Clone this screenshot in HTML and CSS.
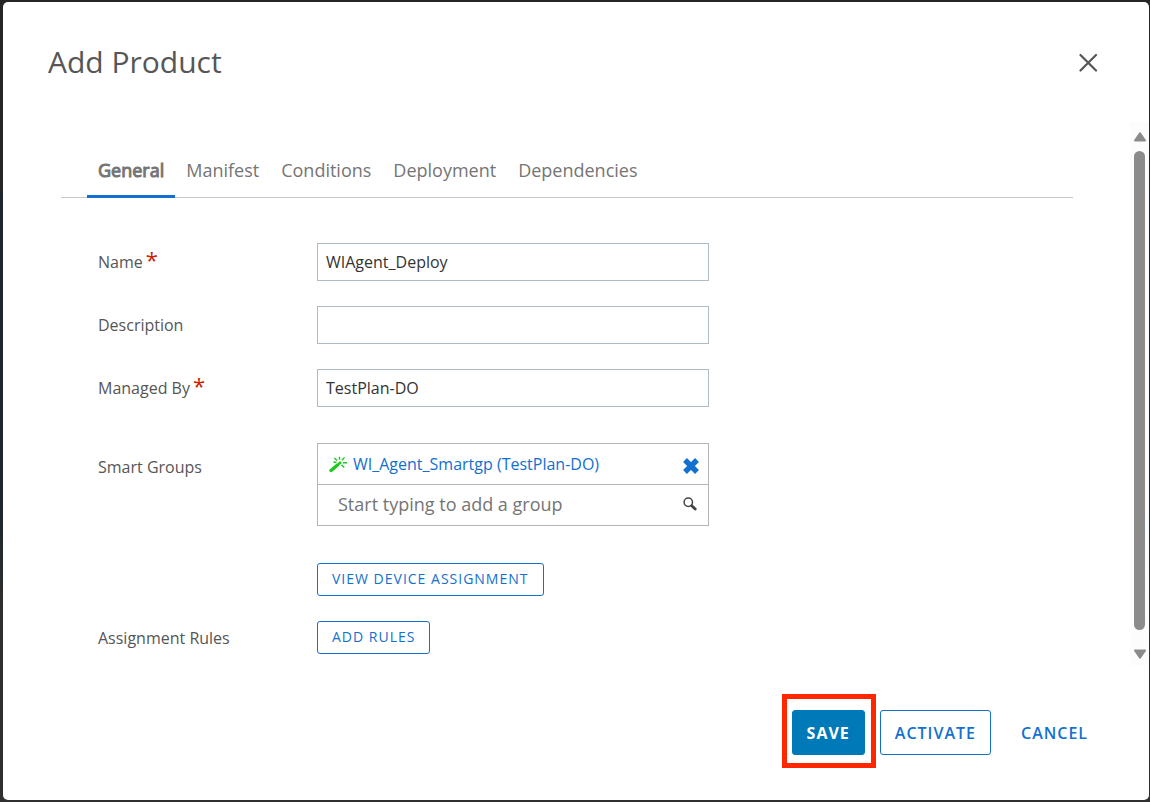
FILE: index.html
```html
<!DOCTYPE html>
<html lang="en">
<head>
<meta charset="utf-8">
<meta name="viewport" content="width=device-width, initial-scale=1">
<title>Add Product</title>
<link rel="stylesheet" href="styles.css">
</head>
<body>
<main class="dialog" role="dialog" aria-labelledby="dialog-title">
  <header class="dialog-header">
    <h1 class="dialog-title" id="dialog-title">Add Product</h1>
    <button class="icon-button" type="button" aria-label="Close">
      <svg width="20" height="20" viewBox="0 0 20 20" fill="none" stroke="#565656" stroke-width="2.2" stroke-linecap="round"><path d="M2.5 3 18 18.5M18 3 2.5 18.5"/></svg>
    </button>
  </header>

  <div class="dialog-body">
    <div class="content">
      <nav class="tabs" aria-label="Product sections">
        <a class="tab tab-active" href="#general" aria-current="page">General</a>
        <a class="tab" href="#manifest">Manifest</a>
        <a class="tab" href="#conditions">Conditions</a>
        <a class="tab" href="#deployment">Deployment</a>
        <a class="tab" href="#dependencies">Dependencies</a>
      </nav>

      <form class="form" id="product-form">
        <div class="row">
          <label class="label" for="name">Name<span class="required">*</span></label>
          <input class="input" id="name" type="text" value="WIAgent_Deploy">
        </div>
        <div class="row">
          <label class="label" for="description">Description</label>
          <input class="input" id="description" type="text">
        </div>
        <div class="row">
          <label class="label" for="managed-by">Managed By<span class="required">*</span></label>
          <input class="input" id="managed-by" type="text" value="TestPlan-DO">
        </div>
        <div class="row row-groups">
          <label class="label label-groups" for="groups">Smart Groups</label>
          <div class="groups">
            <div class="group">
              <svg class="wand" width="18" height="17" viewBox="0 0 18 17" fill="none" stroke="#1fc91f"><path d="M2 14.5 8.5 9" stroke-width="3.4" stroke-linecap="round"/><path d="M9.3 8.4 12 6" stroke-width="2.6"/><path d="M10.5 .8V3.8M5.4 2 8 4.5M15.5 1.5 12.8 4.2M14 6.7H18M12.5 8.8 15.3 11.6M4.5 6.2H7.5" stroke-width="1.4"/></svg>
              <a class="group-link" href="#group">WI_Agent_Smartgp (TestPlan-DO)</a>
              <button class="icon-button" type="button" aria-label="Remove group">
                <svg width="18" height="22" viewBox="0 0 18 22" fill="none" stroke="#1270cf" stroke-width="5.4"><path d="M3 7 15 19M15 7 3 19"/></svg>
              </button>
            </div>
            <div class="group-search">
              <input class="search-input" id="groups" type="text" placeholder="Start typing to add a group">
              <button class="icon-button" type="button" aria-label="Search groups">
                <svg width="16" height="16" viewBox="0 0 16 16" fill="none" stroke="#444"><circle cx="6.3" cy="6.2" r="4.2" stroke-width="1.5"/><path d="M9.8 9.8 13.2 13" stroke-width="2.9" stroke-linecap="round"/></svg>
              </button>
            </div>
          </div>
        </div>
        <div class="row row-view">
          <button class="button" type="button">VIEW DEVICE ASSIGNMENT</button>
        </div>
        <div class="row">
          <span class="label" id="rules-label">Assignment Rules</span>
          <button class="button" type="button" aria-describedby="rules-label">ADD RULES</button>
        </div>
      </form>
    </div>

    <div class="scrollbar" aria-hidden="true">
      <svg width="14" height="10" viewBox="0 0 14 10" fill="#8b8b8b" stroke="#8b8b8b" stroke-width="2" stroke-linejoin="round"><path d="M7 1.2 12 8.5H2Z"/></svg>
      <div class="thumb"></div>
      <svg width="14" height="10" viewBox="0 0 14 10" fill="#8b8b8b" stroke="#8b8b8b" stroke-width="2" stroke-linejoin="round"><path d="M7 8.8 12 1.5H2Z"/></svg>
    </div>
  </div>

  <footer class="dialog-footer">
    <div class="highlight">
      <button class="button button-large button-primary" type="submit" form="product-form">SAVE</button>
    </div>
    <button class="button button-large" type="button">ACTIVATE</button>
    <button class="button button-large button-plain" type="button">CANCEL</button>
  </footer>
</main>
</body>
</html>
```

FILE: styles.css
```css
* {
  box-sizing: border-box;
}

body {
  margin: 0;
  padding: 2px 1px 2px 3px;
  min-height: 100vh;
  display: flex;
  background: linear-gradient(#262626 0 192px, #1c262c 192px 500px, #303030 620px);
  font-family: "Open Sans", "Noto Sans", sans-serif;
  font-size: 16px;
  color: #565656;
}

button,
input {
  font: inherit;
}

button {
  cursor: pointer;
}

.dialog {
  flex: 1;
  display: flex;
  flex-direction: column;
  background: #fff;
  border-radius: 5px;
}

.dialog-header {
  display: flex;
  align-items: center;
  justify-content: space-between;
  height: 120px;
  padding: 0 51px 0 45px;
}

.dialog-title {
  margin: 0;
  padding-bottom: 2px;
  font-size: 30px;
  font-weight: 400;
}

.icon-button {
  display: flex;
  padding: 0;
  border: 0;
  background: none;
}

.dialog-body {
  flex: 1;
  display: flex;
}

.content {
  flex: 1;
  padding: 24px 57px 10px 58px;
}

.tabs {
  display: flex;
  padding-left: 26px;
  border-bottom: 1px solid #c8c8c8;
}

.tab {
  height: 52px;
  margin-bottom: -1px;
  padding: 0 11px;
  border-bottom: 3px solid transparent;
  font-size: 18px;
  line-height: 49px;
  color: #757575;
  text-decoration: none;
}

.tab-active {
  border-color: #1270cf;
  -webkit-text-stroke: 1px #757575;
}

.form {
  display: flex;
  flex-direction: column;
  gap: 25px;
  padding: 45px 0 0 37px;
}

.row {
  display: grid;
  grid-template-columns: 219px minmax(0, 392px);
  align-items: center;
  justify-items: start;
}

.row-groups {
  align-items: start;
  margin: 11px 0 12px;
}

.label-groups {
  padding-top: 13px;
}

.row-view .button {
  grid-column: 2;
}

.required {
  margin-left: 3px;
  font-size: 22px;
  line-height: 16px;
  color: #c92100;
}

.input {
  width: 100%;
  height: 38px;
  padding: 0 8px;
  border: 1px solid #b0bcc5;
  background: #fff;
  color: #333;
}

.groups {
  width: 100%;
  border: 1px solid #b5b5b5;
}

.group,
.group-search {
  display: flex;
  align-items: center;
  height: 41px;
  padding: 0 8px 0 11px;
}

.group {
  gap: 6px;
  border-bottom: 1px solid #b5b5b5;
}

.group-link {
  flex: 1;
  color: #1270cf;
  text-decoration: none;
}

.group-search {
  height: 40px;
  padding: 0 10px 2px 20px;
}

.search-input {
  flex: 1;
  min-width: 0;
  padding: 0;
  border: 0;
  font-size: 18px;
  color: #333;
}

.search-input::placeholder {
  color: #757575;
}

.button {
  height: 33px;
  padding: 0 14px 2px;
  border: 1px solid #1270cf;
  border-radius: 3px;
  background: #fff;
  font-size: 14px;
  letter-spacing: 1px;
  color: #1270cf;
}

.scrollbar {
  display: flex;
  flex-direction: column;
  align-items: center;
  gap: 9px;
  width: 19px;
  padding: 10px 0 6px;
  background: #fcfcfc;
}

.scrollbar svg:last-child {
  margin-top: 10px;
}

.thumb {
  flex: 1;
  width: 11px;
  border-radius: 6px;
  background: #8b8b8b;
}

.dialog-footer {
  display: flex;
  align-items: center;
  justify-content: flex-end;
  gap: 4px;
  height: 135px;
  padding-right: 46px;
}

.highlight {
  margin-bottom: 3px;
  padding: 11px 6px 8px 5px;
  border: 5px solid #ff2600;
}

.button-large {
  height: 45px;
  padding: 0 14px;
  font-size: 16px;
  font-weight: 600;
}

.button-primary {
  border-color: #0079b8;
  background: #0079b8;
  color: #fff;
  font-weight: 700;
}

.button-plain {
  margin-left: 11px;
  border-color: transparent;
}
```
